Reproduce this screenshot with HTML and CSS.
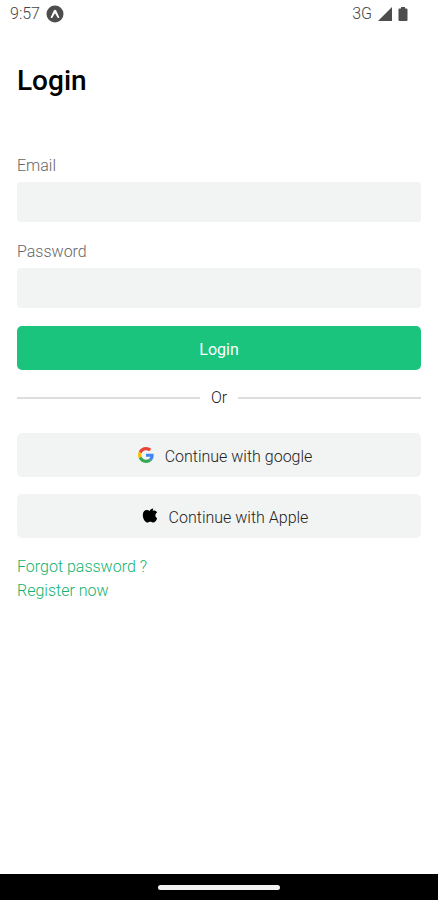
FILE: index.html
```html
<!DOCTYPE html>
<html lang="en">
<head>
<meta charset="utf-8">
<meta name="viewport" content="width=device-width, initial-scale=1">
<title>Login</title>
<link rel="stylesheet" href="styles.css">
</head>
<body>
<header class="status">
  <div class="status-group">
    <span>9:57</span>
    <svg width="18" height="18" viewBox="0 0 18 18" aria-hidden="true"><circle cx="9" cy="9" r="8.5" fill="#4d4d4d"/><path d="M4.600 12.400 7.800 5.500Q9 3.800 10.200 5.500l3.200 6.900q-.9 1.300-1.900.1L9 8.200l-2.500 4.300q-1 1.200-1.900-.1Z" fill="#fff"/></svg>
  </div>
  <div class="status-group">
    <span>3G</span>
    <svg width="14" height="14" viewBox="0 0 14 14" aria-hidden="true"><path d="M0 14 14 0v14Z" fill="#4d4d4d"/></svg>
    <svg width="10" height="14" viewBox="0 0 10 14" aria-hidden="true"><path d="M3 0h4v1.500h1.500q1 0 1 1V13q0 1-1 1h-7q-1 0-1-1V2.500q0-1 1-1H3Z" fill="#4d4d4d"/></svg>
  </div>
</header>
<main class="content">
  <h1 class="title">Login</h1>
  <form class="form">
    <label class="label" for="email">Email</label>
    <input class="field" id="email" type="email">
    <label class="label" for="password">Password</label>
    <input class="field" id="password" type="password">
    <button class="button primary" type="submit">Login</button>
    <div class="divider">Or</div>
    <button class="button social" type="button">
      <svg width="16" height="16" viewBox="0 0 48 48" aria-hidden="true"><path fill="#ea4335" d="M24 9.500c3.540 0 6.710 1.220 9.210 3.600l6.850-6.850C35.900 2.380 30.470 0 24 0 14.620 0 6.510 5.380 2.560 13.220l7.980 6.190C12.430 13.720 17.740 9.500 24 9.500z"/><path fill="#4285f4" d="M46.980 24.550c0-1.570-.15-3.090-.38-4.550H24v9.020h12.940c-.58 2.960-2.260 5.480-4.780 7.180l7.730 6c4.510-4.180 7.090-10.360 7.090-17.650z"/><path fill="#fbbc05" d="M10.530 28.590c-.48-1.450-.76-2.990-.76-4.590s.27-3.140.76-4.590l-7.980-6.190C.92 16.460 0 20.120 0 24c0 3.880.92 7.540 2.560 10.780l7.970-6.190z"/><path fill="#34a853" d="M24 48c6.480 0 11.930-2.130 15.890-5.810l-7.730-6c-2.150 1.450-4.920 2.300-8.160 2.300-6.260 0-11.570-4.220-13.470-9.910l-7.980 6.190C6.510 42.620 14.620 48 24 48z"/></svg>
      Continue with google
    </button>
    <button class="button social" type="button">
      <svg width="16" height="16" viewBox="0 0 16 16" aria-hidden="true"><path fill="#000" d="M11.200.6C9 .9 7.800 1.900 7.900 3.100 6 1.700 3.600 1.500 2.200 2.900.5 4.600.4 8.300 1.700 11.200c1.100 2.500 2.800 3.800 4.800 3 1.300-.5 2.200-.5 3.500 0 2.200.8 4.400-1 5.100-4-2.200-1.200-2.300-4.100.1-5.600C14.200 2.500 12.400 1.900 10.500 2.800q.7-1 .7-2.200Z"/></svg>
      Continue with Apple
    </button>
  </form>
  <nav class="links">
    <a href="#forgot">Forgot password ?</a>
    <a href="#register">Register now</a>
  </nav>
</main>
<footer class="home-bar"><div class="home-pill"></div></footer>
</body>
</html>
```
FILE: styles.css
```css
* {
  box-sizing: border-box;
}

body {
  margin: 0;
  min-height: 100vh;
  display: flex;
  flex-direction: column;
  background: #fff;
  color: #222;
  font: 300 16px/24px Roboto, sans-serif;
}

.status {
  display: flex;
  justify-content: space-between;
  padding: 2px 30px 2px 10px;
  color: #444;
}

.status-group {
  display: flex;
  align-items: center;
  gap: 6px;
}

.content {
  flex: 1;
  padding: 36px 17px 24px;
}

.title {
  margin: 0 0 56px;
  color: #000;
  font-size: 28px;
  line-height: 34px;
  font-weight: 500;
}

.form {
  display: flex;
  flex-direction: column;
}

.label {
  margin-bottom: 4px;
  color: #666;
}

.field {
  width: 100%;
  height: 40px;
  margin: 0 0 18px;
  padding: 0 12px;
  border: 0;
  border-radius: 3px;
  background: #f2f4f4;
  font: inherit;
}

.button {
  display: flex;
  align-items: center;
  justify-content: center;
  gap: 11px;
  height: 44px;
  padding: 3px 16px 0;
  border: 0;
  border-radius: 5px;
  font: inherit;
}

.primary {
  background: #1ac47d;
  color: #fff;
  font-weight: 400;
}

.social {
  padding-left: 28px;
  background: #f2f4f4;
  color: #222;
}

.social svg {
  margin-bottom: 4px;
}

.social + .social {
  margin-top: 17px;
}

.divider {
  display: flex;
  align-items: center;
  gap: 11px;
  margin: 16px 0 23px;
}

.divider::before,
.divider::after {
  content: "";
  flex: 1;
  height: 2px;
  background: #ddd;
}

.links {
  display: flex;
  flex-direction: column;
  align-items: flex-start;
  margin-top: 17px;
}

.links a {
  color: #12b26c;
  text-decoration: none;
}

.home-bar {
  display: flex;
  align-items: center;
  justify-content: center;
  height: 26px;
  background: #000;
}

.home-pill {
  width: 122px;
  height: 5px;
  border-radius: 3px;
  background: #f2f2f2;
}
```
